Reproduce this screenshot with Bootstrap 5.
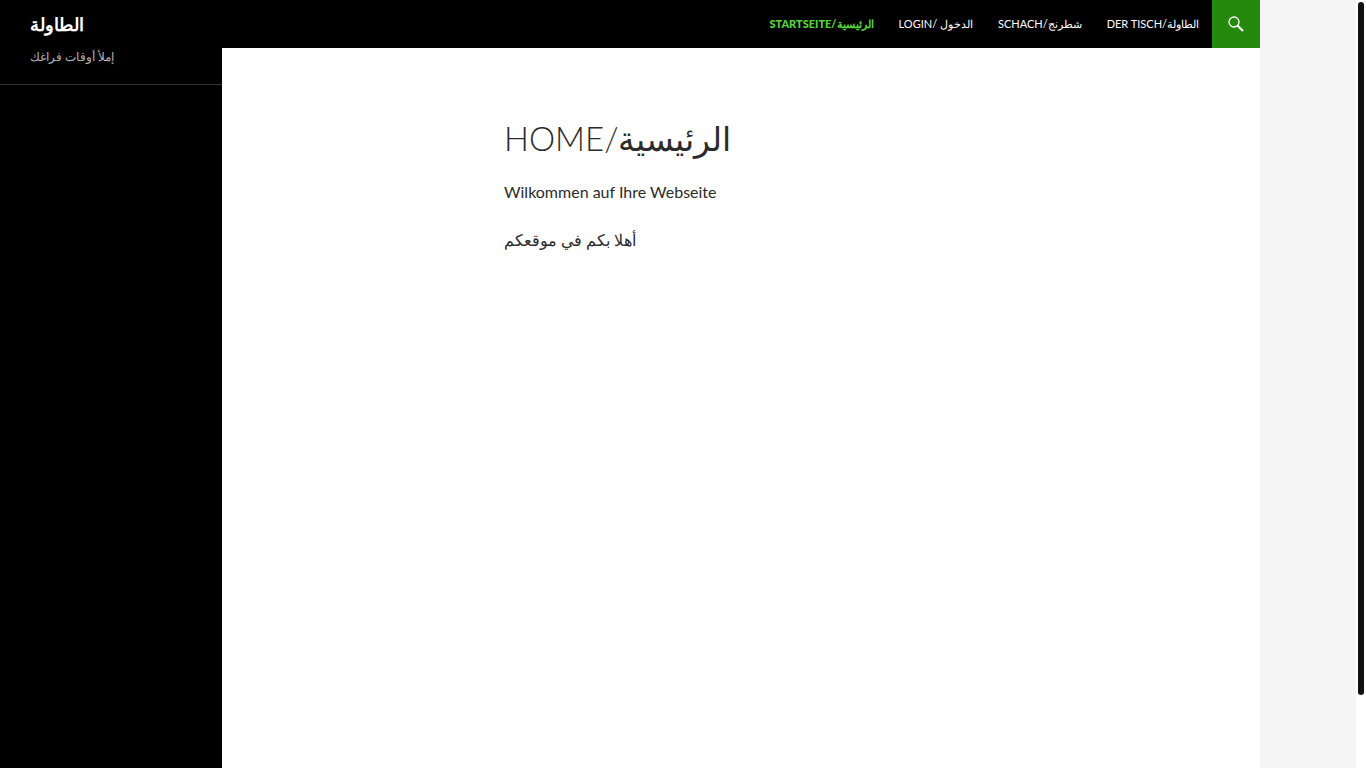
<!DOCTYPE html>
<html lang="de">
<head>
<meta charset="utf-8">
<meta name="viewport" content="width=device-width, initial-scale=1">
<title>الطاولة</title>
<link href="https://cdn.jsdelivr.net/npm/bootstrap@5.3.0/dist/css/bootstrap.min.css" rel="stylesheet">
<script defer src="https://cdn.jsdelivr.net/npm/bootstrap@5.3.0/dist/js/bootstrap.bundle.min.js"></script>
<style>
body { font-family: Lato, sans-serif; font-size: 16px; line-height: 24px; color: #2b2b2b; background: #fff; }
.page-canvas { background: #f5f5f5; }
.site { max-width: 1260px; background: #fff; }
.side-column { width: 222px; }
.masthead { height: 48px; }
.site-title { font-size: 18px; line-height: 48px; padding-left: 30px; }
.site-title a { color: #fff; }
.tagline { font-size: 12px; line-height: 17px; color: rgba(255,255,255,.7); padding: 0 0 19px 30px; border-bottom: 1px solid rgba(255,255,255,.2); }
.main-menu .nav-link { font-size: 11px; line-height: 48px; padding: 0 13px 0 12px; color: #fff; }
.main-menu .nav-link.active { color: #55d737; font-weight: 900; }
.search-toggle { width: 48px; height: 48px; background: #24890d; }
.entry { max-width: 474px; padding-top: 72px; }
.entry-title { font-size: 33px; line-height: 36px; font-weight: 300; margin-bottom: 24px; }
.entry p { margin-bottom: 24px; }
.scroll-track { width: 10px; padding: 2px; }
.scroll-thumb { height: 90.7%; background: #111; border-radius: 3px; }
</style>
</head>
<body>
<div class="d-flex vh-100">
  <div class="page-canvas flex-grow-1">
    <div class="site d-flex h-100">
      <aside class="side-column bg-black flex-shrink-0">
        <h1 class="site-title fw-bold m-0"><a class="text-decoration-none" href="#">الطاولة</a></h1>
        <div class="tagline">إملأ أوقات فراغك</div>
      </aside>
      <div class="flex-grow-1">
        <header class="masthead bg-black d-flex justify-content-end">
          <nav class="main-menu nav flex-nowrap text-uppercase text-nowrap">
            <a class="nav-link active" aria-current="page" href="#">Startseite/الرئيسية</a>
            <a class="nav-link" href="#">Login/ الدخول</a>
            <a class="nav-link" href="#">Schach/شطرنج</a>
            <a class="nav-link" href="#">Der Tisch/الطاولة</a>
          </nav>
          <button class="search-toggle btn rounded-0 border-0 p-0 d-flex align-items-center justify-content-center" type="button" aria-label="Suche">
            <svg width="16" height="16" viewBox="0 0 16 16" fill="none" stroke="#fff" aria-hidden="true"><circle cx="6" cy="6" r="5" stroke-width="1.3"/><path d="M9.7 9.7 15 15" stroke-width="2"/></svg>
          </button>
        </header>
        <main class="entry mx-auto">
          <h2 class="entry-title text-uppercase">Home/الرئيسية</h2>
          <p>Wilkommen auf Ihre Webseite</p>
          <p>أهلا بكم في موقعكم</p>
        </main>
      </div>
    </div>
  </div>
  <div class="scroll-track bg-white flex-shrink-0" aria-hidden="true"><div class="scroll-thumb"></div></div>
</div>
</body>
</html>
